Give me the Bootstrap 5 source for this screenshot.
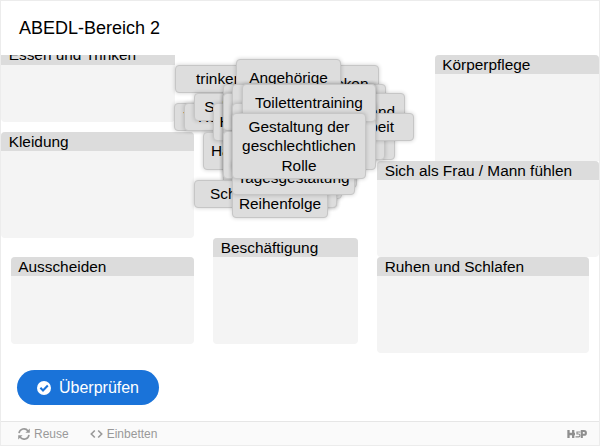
<!DOCTYPE html>
<html lang="de">
<head>
<meta charset="utf-8">
<meta name="viewport" content="width=device-width, initial-scale=1">
<title>ABEDL-Bereich 2</title>
<link href="https://cdn.jsdelivr.net/npm/bootstrap@5.3.0/dist/css/bootstrap.min.css" rel="stylesheet">
<style>
body { font-family: "Liberation Sans", Arial, sans-serif; color: #000; background: #fff; }
.frame { height: 446px; border: 1px solid #ececec; }
.task-title { height: 54px; padding-left: 18px; font-size: 18px; }
.board { height: 301px; font-size: 15.4px; line-height: 19.4px; }
.side-left { width: 193px; }
.side-mid { width: 145px; margin-left: 19px; padding-top: 183px; }
.side-right { width: 222px; margin-left: 19px; }
.zone { background: #f4f4f4; border-radius: 4px; }
.zone-label { background: #dcdcdc; height: 19px; padding-left: 7.7px; border-radius: 4px 4px 0 0; }
.z-essen { width: 174px; height: 77px; margin-top: -10px; margin-bottom: 10px; }
.z-essen .zone-label { height: 20px; border-radius: 0; }
.z-kleidung { height: 106px; margin-bottom: 19px; }
.z-aus { width: 183px; height: 87px; }
.z-besch { height: 106px; }
.z-koerper { width: 164px; height: 106px; border-radius: 4px 4px 0 0; }
.z-frau { height: 96px; }
.z-ruhen { width: 212px; height: 96px; }
.z-aus .zone-label, .z-koerper .zone-label { padding-left: 7.2px; }
.tile { background: #ddd; border: 1px solid #c6c6c6; border-radius: 4px; box-shadow: 0 0 4px rgba(0,0,0,.2); white-space: nowrap; overflow: hidden; }
.actions { padding: 14px 0 0 16px; }
.check { width: 142px; height: 35px; background: #1a73d9; color: #fff; font-size: 16px; gap: 8px; }
.check:hover { background: #1356a3; color: #fff; }
.foot { height: 24px; background: #fafafa; border-top: 1px solid #e6e6e6; color: #999; font-size: 12px; padding: 0 12px 0 17px; }
.embed { margin-left: 21px; }
</style>
<script src="https://cdn.jsdelivr.net/npm/bootstrap@5.3.0/dist/js/bootstrap.bundle.min.js"></script>
</head>
<body>
<main class="frame d-flex flex-column overflow-hidden">
  <header class="task-title d-flex align-items-center flex-shrink-0">ABEDL-Bereich 2</header>
  <section class="board position-relative d-flex align-items-start flex-shrink-0 overflow-hidden">
    <div class="side-left d-flex flex-column flex-shrink-0">
      <div class="zone z-essen"><div class="zone-label">Essen und Trinken</div></div>
      <div class="zone z-kleidung"><div class="zone-label">Kleidung</div></div>
      <div class="zone z-aus align-self-end"><div class="zone-label">Ausscheiden</div></div>
    </div>
    <div class="side-mid flex-shrink-0">
      <div class="zone z-besch"><div class="zone-label">Beschäftigung</div></div>
    </div>
    <div class="side-right d-flex flex-column flex-shrink-0">
      <div class="zone z-koerper align-self-end"><div class="zone-label">Körperpflege</div></div>
      <div class="zone z-frau"><div class="zone-label">Sich als Frau / Mann fühlen</div></div>
      <div class="zone z-ruhen"><div class="zone-label">Ruhen und Schlafen</div></div>
    </div>
    <div id="tiles"></div>
  </section>
  <div class="actions flex-grow-1">
    <button type="button" class="check btn rounded-pill border-0 p-0 d-flex align-items-center justify-content-center">
      <svg width="14" height="14" viewBox="0 0 14 14" aria-hidden="true"><circle cx="7" cy="7" r="7" fill="#fff"/><path d="M3.4 6.8l2.6 2.6 4.8-4.8" fill="none" stroke="#1a73d9" stroke-width="2.1"/></svg>
      <span>Überprüfen</span>
    </button>
  </div>
  <footer class="foot d-flex align-items-center flex-shrink-0">
    <span class="d-flex align-items-center gap-1"><svg width="12" height="12" viewBox="0 0 12 12" fill="none" stroke="#999" stroke-width="1.6" aria-hidden="true"><path d="M1 5.2A5 5 0 0 1 10 3M11 6.8A5 5 0 0 1 2 9"/><path d="M11.8.4v4.4H7.4zM.2 11.6V7.2h4.4z" fill="#999" stroke="none"/></svg>Reuse</span>
    <span class="embed d-flex align-items-center gap-1"><svg width="13" height="10" viewBox="0 0 13 10" fill="none" stroke="#999" stroke-width="1.6" aria-hidden="true"><path d="M4.8 1.5L1.3 5l3.5 3.5M8.2 1.5L11.7 5 8.2 8.5"/></svg>Einbetten</span>
    <svg class="ms-auto" width="20" height="10" viewBox="0 0 20 10" fill="none" stroke="#8f8f8f" aria-label="H5P"><path d="M1.5 1v8M6.2 1v8M1.5 5h6.500" stroke-width="2.300"/><path d="M13.500 3H10V5h1.600a1.400 1.400 0 0 1 0 2.800H8.500" stroke-width="1.200"/><path d="M14.800 9V2h2.200a1.800 1.800 0 0 1 0 3.800h-2.200" stroke-width="2.100"/></svg>
  </footer>
</main>
<script>
// Draggable terms in stacking order: left, top, right, bottom, text,
// inset (positive from the left edge, negative from the right edge, centred when omitted)
const terms = [
  [175, 65, 270, 93, "trinken", 20],
  [290, 65, 379, 103, "decken", -9.5],
  [174, 103, 290, 131, "Trost", 8.4],
  [184, 103, 290, 131, "Reden", 13],
  [194, 93, 290, 121, "Schutz", 9.3],
  [290, 84, 386, 122, ""],
  [300, 93, 405, 131, "Verband", -9],
  [300, 132, 395, 160, ""],
  [203, 132, 290, 170, "Haare", 7],
  [213, 103, 290, 141, "Hobby", 5.5],
  [300, 122, 385, 160, ""],
  [300, 113, 414, 141, "Arbeit", -19],
  [223, 84, 357, 179, ""],
  [223, 94, 357, 188, ""],
  [223, 93, 300, 131, ""],
  [194, 180, 337, 208, "Schlafen", 15],
  [260, 170, 342, 199, ""],
  [260, 170, 337, 208, ""],
  [236, 59, 341, 97, "Angehörige"],
  [223, 131, 357, 179, ""],
  [232, 84, 376, 131, ""],
  [232, 190, 328, 218, "Reihenfolge"],
  [232, 161, 355, 195, "Tagesgestaltung"],
  [232, 103, 376, 170, ""],
  [242, 84, 376, 122, "Toilettentraining"],
  [232, 113, 366, 179, "Gestaltung der<br>geschlechtlichen<br>Rolle"]
];
const holder = document.getElementById("tiles");
for (const [l, t, r, b, text, inset] of terms) {
  const el = document.createElement("div");
  const align = !inset ? "center" : inset > 0 ? "start" : "end";
  el.className = "tile position-absolute d-flex align-items-center text-center justify-content-" + align;
  el.style.cssText = `left:${l - 1}px;top:${t - 55}px;width:${r - l}px;height:${b - t}px;`;
  if (inset > 0) el.style.paddingLeft = inset + "px";
  if (inset < 0) el.style.paddingRight = -inset + "px";
  el.innerHTML = `<span>${text}</span>`;
  holder.appendChild(el);
}
</script>
</body>
</html>
